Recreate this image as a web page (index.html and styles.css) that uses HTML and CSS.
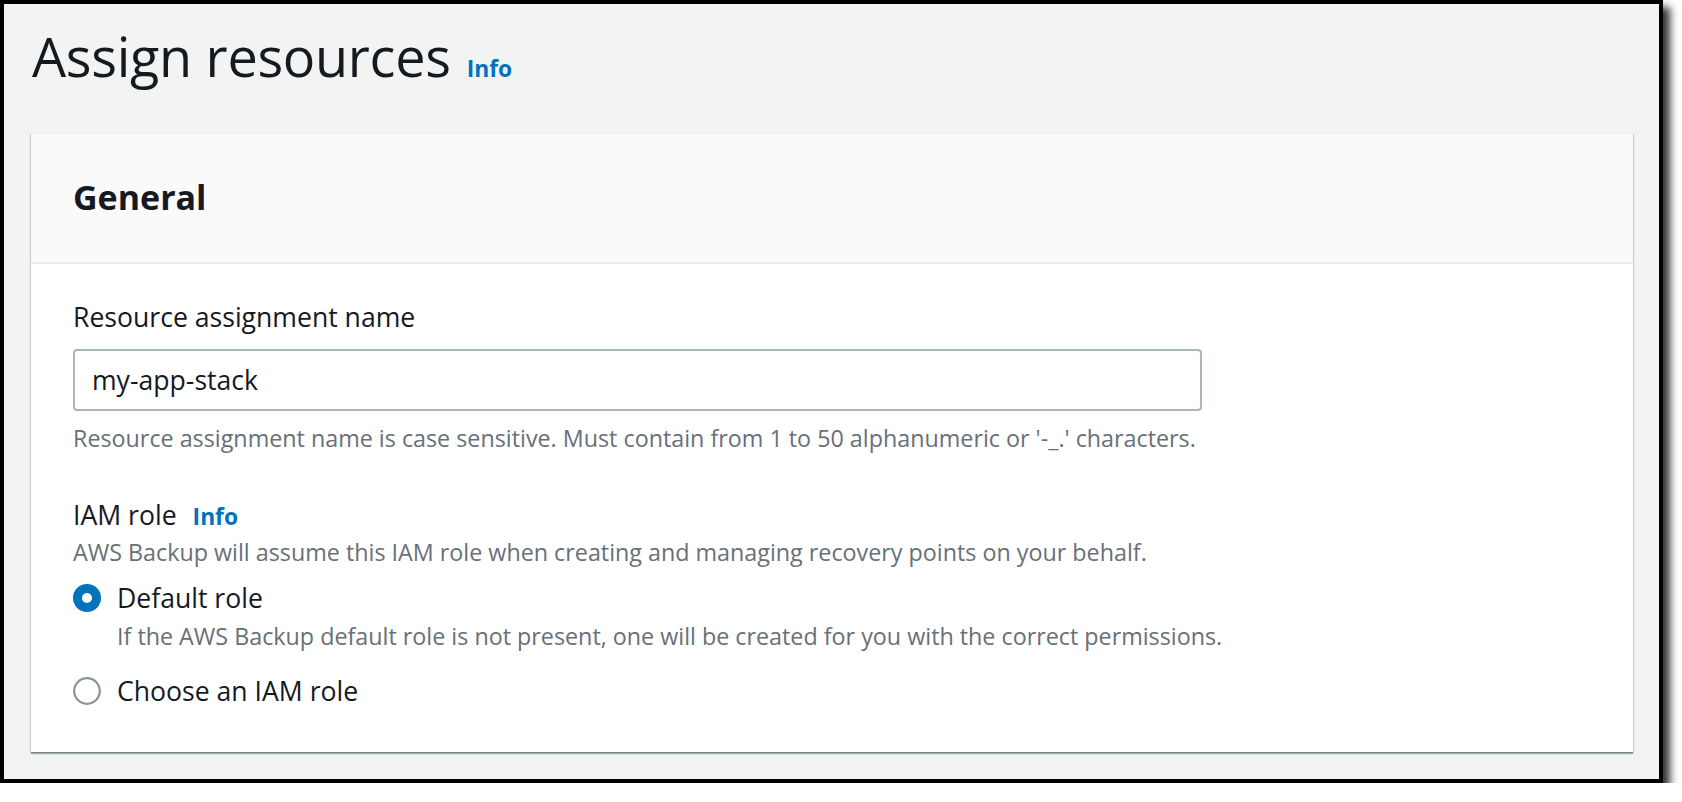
FILE: index.html
```html
<!DOCTYPE html>
<html lang="en">
<head>
<meta charset="utf-8">
<title>Assign resources</title>
<link rel="stylesheet" href="styles.css">
</head>
<body>
<div class="frame">
  <div class="page-head">
    <h1 class="title">Assign resources</h1>
    <a class="info info-title" href="#">Info</a>
  </div>
  <section class="card">
    <header class="card-head">
      <h2 class="card-title">General</h2>
    </header>
    <div class="card-body">
      <div class="field">
        <label class="label" for="name">Resource assignment name</label>
        <input class="input" id="name" type="text" value="my-app-stack">
        <p class="help">Resource assignment name is case sensitive. Must contain from 1 to 50 alphanumeric or '-_.' characters.</p>
      </div>
      <div class="field field-role">
        <div class="label-row">
          <span class="label">IAM role</span>
          <a class="info info-label" href="#">Info</a>
        </div>
        <p class="desc">AWS Backup will assume this IAM role when creating and managing recovery points on your behalf.</p>
        <div class="radio-row row-first">
          <svg class="radio" viewBox="0 0 28 28" width="28" height="28"><circle cx="14" cy="14" r="14" fill="#0073bb"/><circle cx="14" cy="14" r="5" fill="#ffffff"/></svg>
          <span class="radio-label">Default role</span>
        </div>
        <p class="radio-desc">If the AWS Backup default role is not present, one will be created for you with the correct permissions.</p>
        <div class="radio-row row-second">
          <svg class="radio" viewBox="0 0 28 28" width="28" height="28"><circle cx="14" cy="14" r="12.8" fill="#ffffff" stroke="#879596" stroke-width="2.2"/></svg>
          <span class="radio-label">Choose an IAM role</span>
        </div>
      </div>
    </div>
  </section>
</div>
</body>
</html>
```

FILE: styles.css
```css
html, body {
  margin: 0;
  padding: 0;
  background: #ffffff;
}

body {
  font-family: "Open Sans", "Noto Sans", sans-serif;
  color: #16191f;
}

.frame {
  box-sizing: border-box;
  width: 1663px;
  height: 783px;
  border: 4px solid #000000;
  background: #f2f3f3;
  box-shadow: 7px 7px 8px rgba(0, 0, 0, 0.8);
  padding: 20px 26px 0 27px;
}

.page-head {
  display: flex;
  align-items: baseline;
  gap: 16px;
  padding-left: 1px;
}

.title {
  margin: 0;
  font-size: 54px;
  line-height: 64px;
  font-weight: 400;
  color: #16191f;
  letter-spacing: -0.3px;
}

.info {
  color: #0073bb;
  font-weight: 700;
  text-decoration: none;
  font-size: 22.8px;
}

.card {
  margin-top: 45px;
  background: #ffffff;
  border-top: 1px solid #eaeded;
  box-shadow: 0 2px 1px 0 rgba(0, 28, 36, 0.3), 1px 1px 1px 0 rgba(0, 28, 36, 0.15), -1px 1px 1px 0 rgba(0, 28, 36, 0.15);
}

.card-head {
  background: #fafafa;
  padding: 40px 42px 42px;
  border-bottom: 2px solid #eaeded;
}

.card-title {
  margin: 0;
  font-size: 34px;
  line-height: 46px;
  font-weight: 700;
}

.card-body {
  padding: 34px 42px 42px;
}

.field {
  display: flex;
  flex-direction: column;
  align-items: flex-start;
}

.label {
  font-size: 26.6px;
  line-height: 38px;
  color: #16191f;
}

.input {
  box-sizing: border-box;
  margin: 13px 0 0;
  width: 1129px;
  height: 62px;
  border: 2px solid #aab7b8;
  border-radius: 4px;
  padding: 0 17px;
  font-family: inherit;
  font-size: 26.6px;
  color: #16191f;
  background: #ffffff;
}

.help, .desc, .radio-desc {
  margin: 0;
  font-size: 23.3px;
  line-height: 34px;
  color: #687078;
}

.help {
  margin-top: 10px;
}

.desc {
  margin-top: 1px;
}

.field-role {
  margin-top: 41px;
}

.label-row {
  display: flex;
  align-items: baseline;
  gap: 16px;
}

.radio-row {
  display: flex;
  align-items: center;
  gap: 16px;
}

.row-first {
  margin-top: 10px;
}

.row-second {
  margin-top: 19px;
}

.radio {
  display: block;
  flex: none;
}

.radio-label {
  font-size: 26.6px;
  line-height: 38px;
}

.radio-desc {
  margin-left: 44px;
  margin-top: 2px;
}
```
